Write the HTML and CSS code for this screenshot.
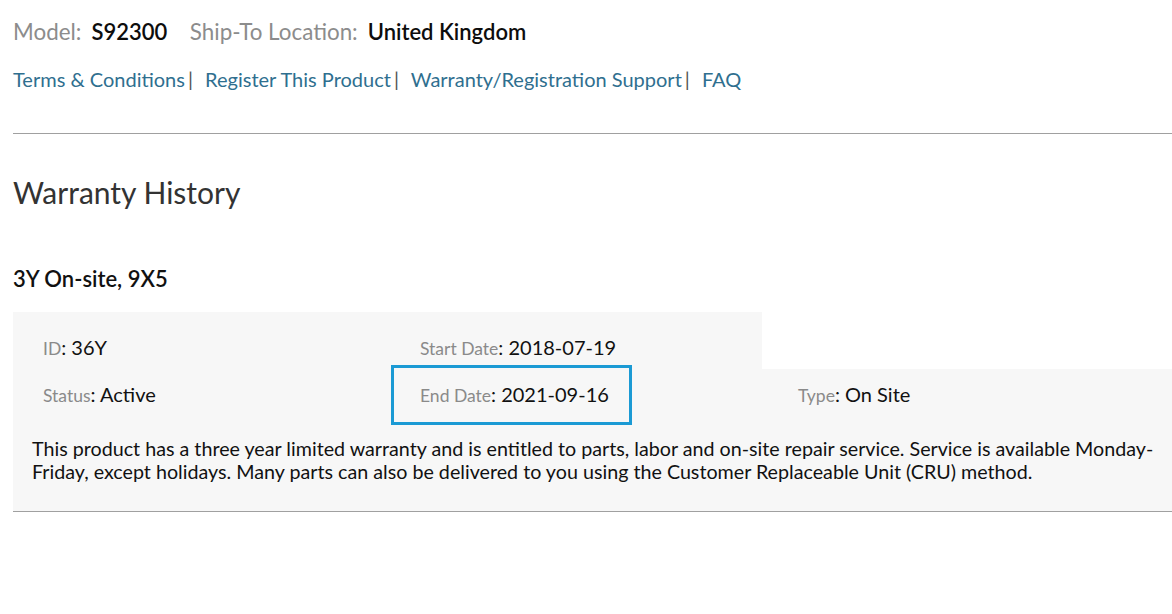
FILE: index.html
```html
<!DOCTYPE html>
<html lang="en">
<head>
<meta charset="utf-8">
<title>Warranty History</title>
<link rel="stylesheet" href="styles.css">
</head>
<body>
<div class="page">
  <div class="meta">
    <span class="meta-label">Model:</span><span class="meta-value">S92300</span>
    <span class="meta-label ship">Ship-To Location:</span><span class="meta-value">United Kingdom</span>
  </div>
  <nav class="links">
    <a href="#">Terms &amp; Conditions</a><span class="sep">|</span>
    <a href="#">Register This Product</a><span class="sep">|</span>
    <a href="#">Warranty/Registration Support</a><span class="sep">|</span>
    <a href="#">FAQ</a>
  </nav>
  <hr class="rule rule-top">
  <h1 class="title">Warranty History</h1>
  <h2 class="subtitle">3Y On-site, 9X5</h2>
  <div class="card">
    <div class="row row-first">
      <div class="cell"><span class="label">ID</span>: <span class="value">36Y</span></div>
      <div class="cell"><span class="label">Start Date</span>: <span class="value">2018-07-19</span></div>
    </div>
    <div class="card-body">
      <div class="row row-second">
        <div class="cell"><span class="label">Status</span>: <span class="value">Active</span></div>
        <div class="cell cell-hl"><span class="label">End Date</span>: <span class="value">2021-09-16</span><span class="highlight"></span></div>
        <div class="cell"><span class="label">Type</span>: <span class="value">On Site</span></div>
      </div>
      <p class="desc">This product has a three year limited warranty and is entitled to parts, labor and on-site repair service. Service is available Monday-Friday, except holidays. Many parts can also be delivered to you using the Customer Replaceable Unit (CRU) method.</p>
    </div>
  </div>
  <hr class="rule rule-bottom">
</div>
</body>
</html>
```
FILE: styles.css
```css
html, body {
  margin: 0;
  padding: 0;
  background: #ffffff;
  overflow: hidden;
}
body {
  font-family: Lato, "Open Sans", "Liberation Sans", sans-serif;
  color: #111111;
}
.page {
  width: 1200px;
  padding: 19px 0 0 13px;
}
.meta {
  font-size: 22px;
  line-height: 26px;
  height: 26px;
  white-space: nowrap;
}
.meta-label {
  color: #8c8c8c;
  font-size: 22.4px;
}
.meta-label.ship {
  margin-left: 17px;
}
.meta-value {
  font-weight: 600;
  color: #0d0d0d;
  margin-left: 10px;
}
.links {
  margin-top: 22px;
  font-size: 20px;
  line-height: 24px;
  height: 24px;
  white-space: nowrap;
}
.links a {
  color: #2f6f8f;
  text-decoration: none;
}
.sep {
  color: #555555;
  margin: 0 7px 0 3px;
}
.rule {
  border: 0;
  height: 1px;
  background: #a0a0a0;
  margin: 0;
}
.rule-top {
  margin-top: 42px;
}
.title {
  margin: 40px 0 0 0;
  font-size: 30px;
  line-height: 36px;
  font-weight: 400;
  color: #333333;
}
.subtitle {
  margin: 56px 0 0 0;
  font-size: 22px;
  line-height: 25px;
  font-weight: 600;
  color: #111111;
}
.card {
  margin-top: 21px;
}
.row {
  display: grid;
  grid-template-columns: 377px 378px 378px;
  padding-left: 30px;
  font-size: 20px;
  line-height: 24px;
}
.row-first {
  width: 719px;
  grid-template-columns: 377px 342px;
  background: #f7f7f7;
  padding-top: 23px;
  padding-bottom: 8px;
}
.card-body {
  background: #f7f7f7;
  padding: 13px 0 28px 0;
}
.label {
  color: #8a8a8a;
  font-size: 17.5px;
}
.value {
  color: #111111;
}
.cell-hl {
  position: relative;
}
.highlight {
  position: absolute;
  left: -29px;
  top: -17px;
  width: 235px;
  height: 54px;
  border: 3px solid #1b9ad4;
}
.desc {
  margin: 29px 0 0 0;
  padding-left: 19px;
  width: 1160px;
  font-size: 19.7px;
  line-height: 23px;
  color: #111111;
}
```
